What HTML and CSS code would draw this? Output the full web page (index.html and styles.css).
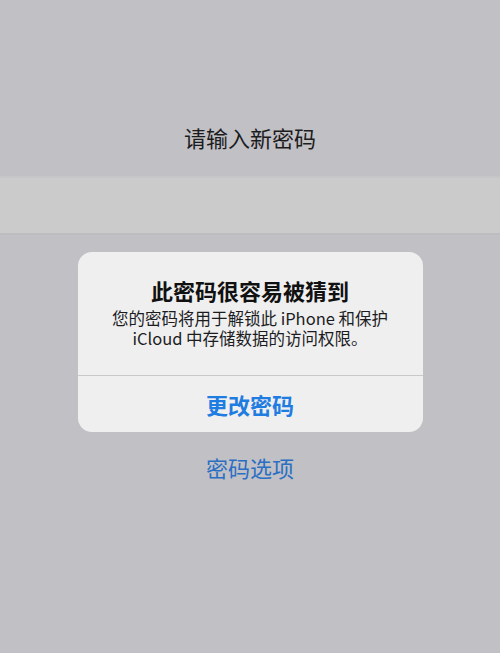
FILE: index.html
```html
<!DOCTYPE html>
<html lang="zh-CN">
<head>
    <meta charset="UTF-8">
    <meta name="viewport" content="width=device-width, initial-scale=1.0">
    <title>请输入新密码</title>
    <link rel="stylesheet" href="styles.css">
</head>
<body>
    <div class="screen">
        <h1 class="page-title">请输入新密码</h1>

        <!-- password field -->
        <div class="field"></div>

        <div class="alert">
            <h2 class="alert-title">此密码很容易被猜到</h2>
            <p class="alert-text">您的密码将用于解锁此 iPhone 和保护<br>iCloud 中存储数据的访问权限。</p>
            <button class="alert-button">更改密码</button>
        </div>

        <a class="options" href="#">密码选项</a>
    </div>
</body>
</html>
```

FILE: styles.css
```css
* {
    margin: 0;
    padding: 0;
    box-sizing: border-box;
}

body {
    background-color: #c1c0c4;
    font-family: "Noto Sans CJK SC", "Noto Sans", sans-serif;
}

.screen {
    height: 653px;
    display: flex;
    flex-direction: column;
    align-items: center;
    padding-top: 122px;
}

.page-title {
    font-size: 22px;
    line-height: 30px;
    font-weight: 400;
    color: #1c1c1e;
}

.field {
    width: 100%;
    height: 59px;
    margin-top: 24px;
    background-color: #cbcbcb;
    border-top: 2px solid #c6c6c8;
    border-bottom: 2px solid #bdbdc0;
}

.alert {
    width: 345px;
    margin-top: 17px;
    background-color: #efeff0;
    border-radius: 14px;
    text-align: center;
    display: flex;
    flex-direction: column;
}

.alert-title {
    font-size: 22px;
    line-height: 28px;
    font-weight: 700;
    color: #111;
    padding-top: 24px;
}

.alert-text {
    font-size: 16.5px;
    line-height: 20px;
    color: #1c1c1e;
    margin-top: 4px;
    padding-bottom: 27px;
    border-bottom: 1px solid #c9c9cc;
}

.alert-button {
    height: 56px;
    border: none;
    background: none;
    font-family: inherit;
    font-size: 22px;
    font-weight: 700;
    color: #1f7ce0;
}

.options {
    margin-top: 20px;
    font-size: 22px;
    line-height: 30px;
    color: #2b6fc4;
    text-decoration: none;
}
```
